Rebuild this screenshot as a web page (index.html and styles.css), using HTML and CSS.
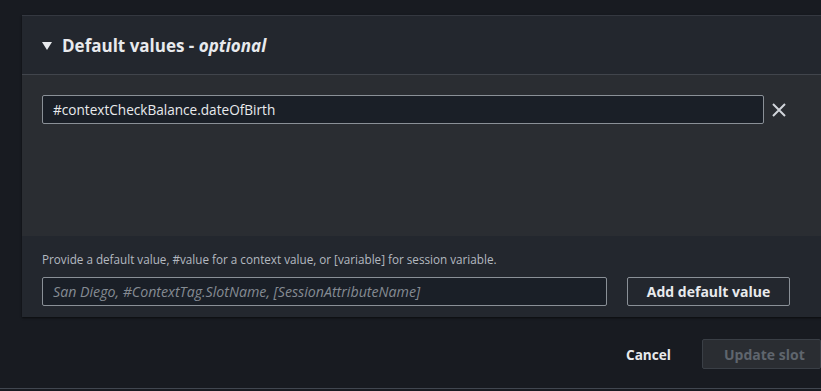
FILE: index.html
```html
<!DOCTYPE html>
<html lang="en">
<head>
    <meta charset="UTF-8">
    <meta name="viewport" content="width=device-width, initial-scale=1.0">
    <title>Default values</title>
    <link rel="stylesheet" href="styles.css">
</head>
<body>
    <div class="panel">
        <div class="panel-header">
            <span class="caret"></span>
            <h2>Default values - <em>optional</em></h2>
        </div>

        <div class="panel-body">
            <div class="value-row">
                <div class="field">#contextCheckBalance.dateOfBirth</div>
                <button class="remove" aria-label="Remove">
                    <svg width="16" height="16" viewBox="0 0 16 16">
                        <path d="M2 2 L14 14 M14 2 L2 14" stroke="#d1d5db" stroke-width="2" fill="none"/>
                    </svg>
                </button>
            </div>
        </div>

        <div class="panel-footer">
            <p class="hint">Provide a default value, #value for a context value, or [variable] for session variable.</p>
            <div class="add-row">
                <input class="field field-input" type="text" placeholder="San Diego, #ContextTag.SlotName, [SessionAttributeName]">
                <button class="btn">Add default value</button>
            </div>
        </div>
    </div>

    <div class="actions">
        <button class="link">Cancel</button>
        <button class="btn btn-disabled">Update slot</button>
    </div>
</body>
</html>
```

FILE: styles.css
```css
body {
    margin: 0;
    background-color: #181b21;
    font-family: "Open Sans", "Noto Sans", sans-serif;
    color: #d1d5db;
    overflow: hidden;
    height: 391px;
    position: relative;
}
body::after {
    content: "";
    position: absolute;
    left: 0;
    right: 0;
    top: 388px;
    height: 1px;
    background: #414750;
}
.panel {
    margin: 15px -30px 0 22px;
    background-color: #23272e;
    border-top: 1px solid #343840;
    box-shadow: 0 1px 2px rgba(0, 0, 0, 0.6);
}
.panel-header {
    display: flex;
    align-items: center;
    height: 58px;
    padding-left: 20px;
    border-bottom: 1px solid #41454c;
}
.caret {
    width: 0;
    height: 0;
    border-left: 5px solid transparent;
    border-right: 5px solid transparent;
    border-top: 8px solid #e8eaed;
    margin-right: 10px;
    margin-top: 1px;
}
.panel-header h2 {
    margin: 0;
    font-size: 17px;
    font-weight: 700;
    color: #e8eaed;
}
.panel-header em {
    font-style: italic;
}
.panel-body {
    background-color: #2a2d32;
    height: 141px;
    padding: 20px 20px 0 20px;
}
.value-row {
    display: flex;
    align-items: center;
}
.field {
    box-sizing: border-box;
    width: 722px;
    height: 29px;
    padding: 0 10px;
    background-color: #1a1f27;
    border: 1px solid #8a9097;
    border-radius: 2px;
    font-family: inherit;
    font-size: 13.6px;
    color: #e8eaed;
    display: flex;
    align-items: center;
}
.remove {
    background: none;
    border: none;
    padding: 0;
    margin-left: 7px;
    width: 16px;
    height: 16px;
    cursor: pointer;
}
.panel-footer {
    padding: 15px 20px 11px 20px;
}
.hint {
    margin: 0 0 10px 0;
    font-size: 11.7px;
    color: #b4b9c0;
    line-height: 16px;
}
.add-row {
    display: flex;
    gap: 20px;
}
.field-input {
    width: 565px;
    outline: none;
    font-size: 14.2px;
}
.field-input::placeholder {
    font-style: italic;
    color: #858b93;
}
.btn {
    box-sizing: border-box;
    height: 29px;
    padding: 0;
    background-color: #23272e;
    border: 1px solid #8a9097;
    border-radius: 2px;
    color: #e8eaed;
    font-family: inherit;
    font-size: 14px;
    font-weight: 700;
    white-space: nowrap;
    cursor: pointer;
    width: 163px;
}
.actions {
    display: flex;
    align-items: center;
    margin-top: 22px;
    padding-left: 604px;
}
.link {
    background: none;
    border: none;
    color: #e8eaed;
    font-family: inherit;
    font-size: 13.6px;
    font-weight: 700;
    padding: 0 22px;
    cursor: pointer;
}
.btn-disabled {
    width: 140px;
    height: 30px;
    margin-left: 9px;
    padding-left: 21px;
    background-color: #2a2d32;
    border-color: #3a3f46;
    color: #5f656d;
    text-align: left;
    cursor: default;
}
```
